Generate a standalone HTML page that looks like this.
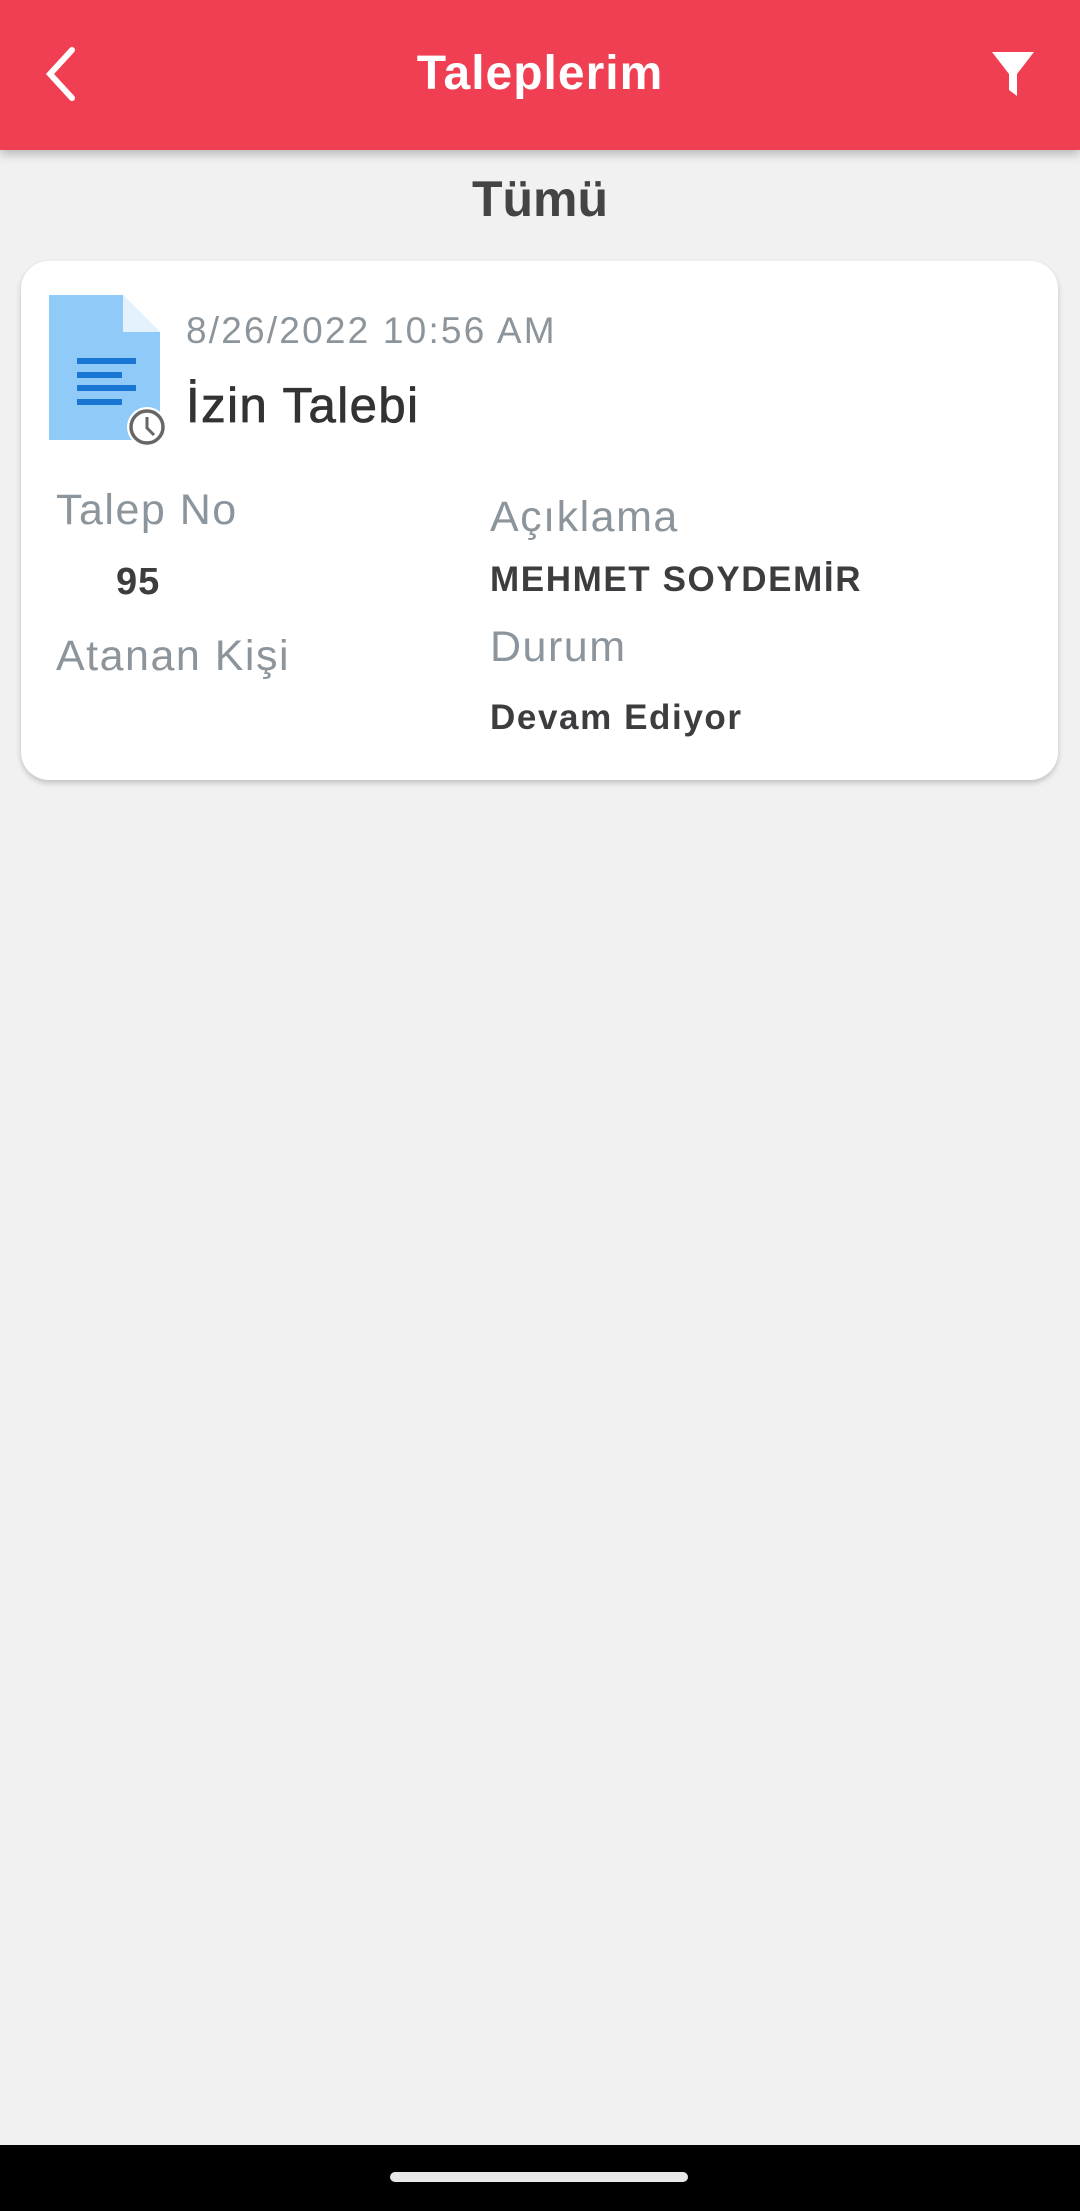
<!DOCTYPE html>
<html><head><meta charset="utf-8"><style>
*{margin:0;padding:0;box-sizing:border-box}
body{width:1080px;height:2211px;background:#f1f1f1;font-family:"Liberation Sans",sans-serif;position:relative;overflow:hidden}
.hdr{position:absolute;left:0;top:0;width:1080px;height:150px;background:#f03e53;box-shadow:0 4px 10px rgba(0,0,0,.25)}
.t{position:absolute;white-space:nowrap;line-height:1}
.card{position:absolute;left:21px;top:261px;width:1037px;height:519px;background:#fff;border-radius:28px;box-shadow:0 3px 6px rgba(0,0,0,.2)}
.lbl{color:#8c959c;font-size:43px;letter-spacing:1.5px}
.val{color:#3d3d40;font-weight:bold;font-size:35px;letter-spacing:2.3px}
</style></head><body>
<div class="hdr">
<svg style="position:absolute;left:40px;top:46px" width="40" height="56" viewBox="0 0 40 56"><path d="M32 4 L10 28 L32 52" fill="none" stroke="#fff" stroke-width="6" stroke-linecap="round"/></svg>
<div class="t" style="left:0;width:1080px;text-align:center;top:50px;font-size:48px;font-weight:bold;color:#fff;letter-spacing:1px">Taleplerim</div>
<svg style="position:absolute;left:990px;top:50px" width="46" height="48" viewBox="0 0 46 48"><path d="M2 2 H44 L27 24 V46 L19 40 V24 Z" fill="#fff"/></svg>
</div>
<div class="t" style="left:0;width:1080px;text-align:center;top:174px;font-size:50px;font-weight:bold;color:#444">Tümü</div>
<div class="card"></div>
<svg style="position:absolute;left:45px;top:290px" width="130" height="165" viewBox="0 0 130 165">
<path d="M4 5 H78 L115 42 V150 H4 Z" fill="#90caf9"/>
<path d="M78 5 L115 42 H78 Z" fill="#e3f2fd"/>
<rect x="32" y="68" width="59" height="6" fill="#1976d2"/>
<rect x="32" y="82" width="45" height="6" fill="#1976d2"/>
<rect x="32" y="95" width="59" height="6" fill="#1976d2"/>
<rect x="32" y="109" width="45" height="6" fill="#1976d2"/>
<circle cx="102" cy="137" r="20" fill="#fff"/>
<circle cx="102" cy="137" r="16" fill="#fff" stroke="#666" stroke-width="3.5"/>
<path d="M102 127 V138 L109 145" fill="none" stroke="#666" stroke-width="3"/>
</svg>
<div class="t" style="left:186px;top:312px;font-size:37px;color:#8c959c;letter-spacing:2.2px">8/26/2022 10:56 AM</div>
<div class="t" style="left:186px;top:382px;font-size:49px;color:#333;letter-spacing:1.5px;-webkit-text-stroke:0.8px #333">İzin Talebi</div>
<div class="t lbl" style="left:56px;top:489px">Talep No</div>
<div class="t val" style="left:116px;top:563px;font-size:38px;letter-spacing:1px">95</div>
<div class="t lbl" style="left:56px;top:635px">Atanan Kişi</div>
<div class="t lbl" style="left:490px;top:496px">Açıklama</div>
<div class="t val" style="left:490px;top:562px;letter-spacing:1.6px">MEHMET SOYDEMİR</div>
<div class="t lbl" style="left:490px;top:626px">Durum</div>
<div class="t val" style="left:490px;top:700px;letter-spacing:1.6px">Devam Ediyor</div>
<div style="position:absolute;left:0;top:2145px;width:1080px;height:66px;background:#000"></div>
<div style="position:absolute;left:390px;top:2172px;width:298px;height:10px;border-radius:5px;background:#e8e8e8"></div>
</body></html>
